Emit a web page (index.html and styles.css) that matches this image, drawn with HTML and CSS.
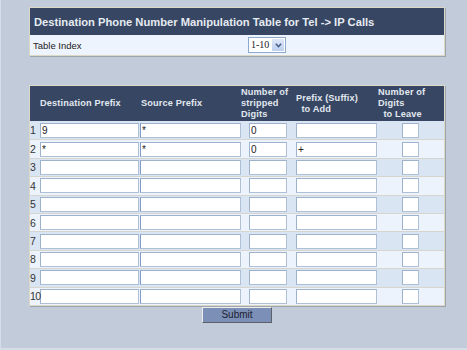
FILE: index.html
```html
<!DOCTYPE html>
<html lang="en">
<head>
    <meta charset="UTF-8">
    <title>Destination Phone Number Manipulation Table for Tel -&gt; IP Calls</title>
    <link rel="stylesheet" href="styles.css">
</head>
<body>
    <div class="page">
        <div class="panel">
            <div class="panel-title">Destination Phone Number Manipulation Table for Tel -&gt; IP Calls</div>
            <div class="index-row">
                <span class="index-label">Table Index</span>
                <div class="select">
                    <span class="select-value">1-10</span>
                    <span class="select-arrow">
                        <svg width="7" height="5" viewBox="0 0 7 5"><path d="M0.8 0.8 L3.5 3.6 L6.2 0.8" fill="none" stroke="#4a5f8c" stroke-width="1.6"/></svg>
                    </span>
                </div>
            </div>
        </div>

        <div class="panel panel-table">
            <table class="manip">
                <colgroup>
                    <col class="c-num">
                    <col class="c-dest">
                    <col class="c-src">
                    <col class="c-strip">
                    <col class="c-prefix">
                    <col class="c-leave">
                </colgroup>
                <thead>
                    <tr>
                        <th></th>
                        <th>Destination Prefix</th>
                        <th class="th-src">Source Prefix</th>
                        <th>Number of<br>stripped<br>Digits</th>
                        <th>Prefix (Suffix)<br>&nbsp;&nbsp;to Add</th>
                        <th class="th-leave">Number of<br>Digits<br>&nbsp;&nbsp;to Leave</th>
                    </tr>
                </thead>
                <tbody>
                    <tr><td class="num">1</td><td><input class="in-dest" value="9"></td><td><input class="in-src" value="*"></td><td><input class="in-strip" value="0"></td><td><input class="in-prefix"></td><td><input class="in-leave"></td></tr>
                    <tr><td class="num">2</td><td><input class="in-dest" value="*"></td><td><input class="in-src" value="*"></td><td><input class="in-strip" value="0"></td><td><input class="in-prefix" value="+"></td><td><input class="in-leave"></td></tr>
                    <tr><td class="num">3</td><td><input class="in-dest"></td><td><input class="in-src"></td><td><input class="in-strip"></td><td><input class="in-prefix"></td><td><input class="in-leave"></td></tr>
                    <tr><td class="num">4</td><td><input class="in-dest"></td><td><input class="in-src"></td><td><input class="in-strip"></td><td><input class="in-prefix"></td><td><input class="in-leave"></td></tr>
                    <tr><td class="num">5</td><td><input class="in-dest"></td><td><input class="in-src"></td><td><input class="in-strip"></td><td><input class="in-prefix"></td><td><input class="in-leave"></td></tr>
                    <tr><td class="num">6</td><td><input class="in-dest"></td><td><input class="in-src"></td><td><input class="in-strip"></td><td><input class="in-prefix"></td><td><input class="in-leave"></td></tr>
                    <tr><td class="num">7</td><td><input class="in-dest"></td><td><input class="in-src"></td><td><input class="in-strip"></td><td><input class="in-prefix"></td><td><input class="in-leave"></td></tr>
                    <tr><td class="num">8</td><td><input class="in-dest"></td><td><input class="in-src"></td><td><input class="in-strip"></td><td><input class="in-prefix"></td><td><input class="in-leave"></td></tr>
                    <tr><td class="num">9</td><td><input class="in-dest"></td><td><input class="in-src"></td><td><input class="in-strip"></td><td><input class="in-prefix"></td><td><input class="in-leave"></td></tr>
                    <tr><td class="num">10</td><td><input class="in-dest"></td><td><input class="in-src"></td><td><input class="in-strip"></td><td><input class="in-prefix"></td><td><input class="in-leave"></td></tr>
                </tbody>
            </table>
        </div>

        <div class="actions">
            <button class="submit">Submit</button>
        </div>
    </div>
</body>
</html>
```

FILE: styles.css
```css
body {
    margin: 0;
    padding: 0;
    background-color: #c1cbda;
    font-family: "Liberation Sans", Arial, sans-serif;
    color: #222;
}

.page {
    box-sizing: border-box;
    width: 467px;
    height: 350px;
    padding: 7px 0 0 28px;
    border-left: 1px solid #d6dde8;
    border-bottom: 2px solid #d6dde8;
}

.panel {
    width: 414px;
    border: 1px solid #dcd8c6;
    box-shadow: 1px 1px 0 #9ea4ac;
    background-color: #eef4fd;
}

.panel-title {
    height: 27px;
    line-height: 28px;
    padding-left: 4px;
    background-color: #374763;
    color: #e6ebf2;
    font-size: 11.2px;
    font-weight: bold;
    white-space: nowrap;
}

.index-row {
    display: grid;
    grid-template-columns: 215px auto;
    align-items: center;
    height: 20px;
    padding-left: 3px;
}

.index-label {
    font-size: 9.5px;
    color: #222;
}

.select {
    display: flex;
    align-items: stretch;
    box-sizing: border-box;
    width: 38px;
    height: 16px;
    border: 1px solid #8fa9cc;
    background: white;
}

.select-value {
    flex: 1;
    padding-left: 2px;
    font-family: "Liberation Serif", "Times New Roman", serif;
    font-size: 10px;
    line-height: 14px;
    color: #222;
}

.select-arrow {
    display: flex;
    align-items: center;
    justify-content: center;
    width: 12px;
    margin: 1px;
    background: linear-gradient(#dfe8f8, #bccfee);
    border-radius: 1px;
}

.panel-table {
    margin-top: 29px;
}

.manip {
    width: 414px;
    border-collapse: collapse;
    table-layout: fixed;
}

.c-num { width: 10px; }
.c-dest { width: 100px; }
.c-src { width: 101px; }
.c-strip { width: 55px; }
.c-prefix { width: 81px; }
.c-leave { width: 67px; }

.manip th {
    height: 35px;
    padding: 0;
    background-color: #374763;
    color: #e2e8f0;
    font-size: 9.2px;
    font-weight: bold;
    line-height: 11px;
    letter-spacing: 0.15px;
    text-align: left;
    vertical-align: middle;
    white-space: nowrap;
}

.manip .th-src,
.manip .th-leave {
    padding-left: 1px;
}

.manip td {
    height: 17.4px;
    padding: 0;
    border-top: 1px solid #d6d6ce;
    vertical-align: middle;
}

.manip tbody tr:first-child td {
    border-top: none;
    height: 18.4px;
}

.manip tbody tr:nth-child(odd) td {
    background-color: #dae5f4;
}

.manip tbody tr:nth-child(even) td {
    background-color: #edf3fc;
}

.manip td.num {
    font-size: 10.5px;
    color: #333;
    white-space: nowrap;
    overflow: visible;
    letter-spacing: -0.5px;
}

.manip input {
    display: block;
    box-sizing: border-box;
    height: 15px;
    margin: 0;
    padding: 0 1px;
    border: 1px solid #afbfd4;
    border-top-color: #9fb2cc;
    border-left-color: #9fb2cc;
    background: white;
    font-family: "Liberation Sans", Arial, sans-serif;
    font-size: 10px;
    color: #222;
    outline: none;
}

.in-dest { width: 99px; }
.in-src { width: 101px; border-left-color: #7f9dc6 !important; }
.in-strip { width: 38px; margin-left: 8px !important; }
.in-prefix { width: 81px; }
.in-leave { width: 17px; margin-left: 25px !important; }

.actions {
    display: flex;
    justify-content: center;
    width: 416px;
    margin-top: 1px;
}

.submit {
    box-sizing: border-box;
    width: 70px;
    height: 16px;
    padding: 0;
    background-color: #7b8fb7;
    border: 1px solid;
    border-color: #eceef0 #5c6068 #5c6068 #eceef0;
    color: #1c2230;
    font-family: "Liberation Sans", Arial, sans-serif;
    font-size: 10px;
    cursor: pointer;
}
```
